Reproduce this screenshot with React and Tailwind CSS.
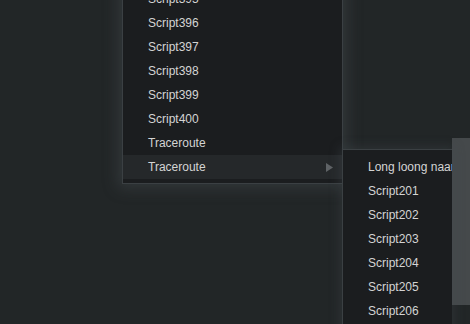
const mainItems = ["Script395", "Script396", "Script397", "Script398", "Script399", "Script400", "Traceroute"];
const subItems = ["Long loong naame script", "Script201", "Script202", "Script203", "Script204", "Script205", "Script206", "Script207"];

function Item({ label, active, arrow }) {
  return (
    <div
      className={`flex items-center justify-between h-6 pl-[25px] pr-[9px] whitespace-nowrap ${active ? "bg-[#25282a]" : ""}`}
    >
      <span>{label}</span>
      {arrow && (
        <svg width="7" height="9" viewBox="0 0 7 9" className="shrink-0">
          <path d="M0 0 L7 4.5 L0 9 Z" fill="#5f6366" />
        </svg>
      )}
    </div>
  );
}

export default function App() {
  return (
    <div
      className="relative w-[470px] h-[324px] overflow-hidden bg-[#222627] text-[12px] text-[#d4d4d4]"
      style={{ fontFamily: '"Liberation Sans", Arial, sans-serif' }}
    >
      {/* stray panel on the right edge */}
      <div className="absolute left-[452px] top-[138px] w-[18px] h-[167px] bg-[#45494b]" />

      {/* main menu */}
      <div className="absolute left-[122px] top-[-17px] w-[221px] bg-[#1b1d1f] border border-[#3b4043] pt-[3px] pb-[4px] shadow-[0_0_14px_4px_rgba(70,78,82,0.45)]">
        {mainItems.map(label => (
          <Item key={label + "a"} label={label} />
        ))}
        <Item label="Traceroute" active arrow />
      </div>

      {/* submenu */}
      <div className="absolute left-[342px] top-[149px] w-[110px] h-[200px] overflow-hidden bg-[#1b1d1f] border-l border-t border-[#3b4043] pt-[5px] shadow-[0_0_10px_2px_rgba(70,78,82,0.35)]">
        {subItems.map(label => (
          <Item key={label} label={label} />
        ))}
      </div>
    </div>
  );
}
